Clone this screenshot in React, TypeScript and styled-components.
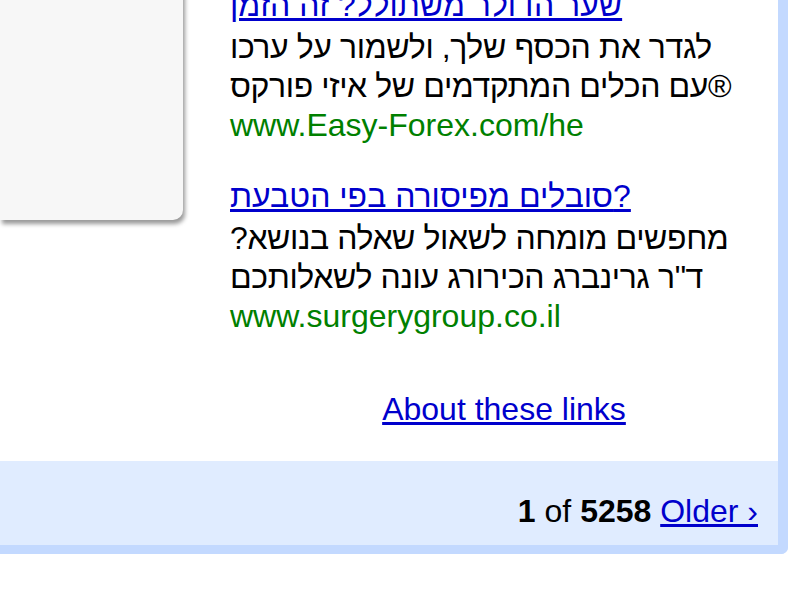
import styled, { createGlobalStyle } from "styled-components";

const GlobalStyle = createGlobalStyle`
  html, body {
    margin: 0;
    padding: 0;
    background: #ffffff;
    overflow: hidden;
  }
  body {
    font-family: "Liberation Sans", Arial, "DejaVu Sans", sans-serif;
    font-size: 32px;
    color: #000000;
  }
`;

type Ad = {
  title: string;
  lines: string[];
  url: string;
};

const ads: Ad[] = [
  {
    title: "שער הדולר משתולל? זה הזמן",
    lines: ["לגדר את הכסף שלך, ולשמור על ערכו", "עם הכלים המתקדמים של איזי פורקס®"],
    url: "www.Easy-Forex.com/he",
  },
  {
    title: "סובלים מפיסורה בפי הטבעת?",
    lines: ["?מחפשים מומחה לשאול שאלה בנושא", "ד\"ר גרינברג הכירורג עונה לשאלותכם"],
    url: "www.surgerygroup.co.il",
  },
];

const Frame = styled.div`
  width: 778px;
  border-right: 10px solid #c3d9ff;
  border-bottom: 9px solid #c3d9ff;
  border-bottom-right-radius: 7px;
  overflow: hidden;
`;

const Content = styled.div`
  display: grid;
  grid-template-columns: 183px 1fr;
  column-gap: 47px;
  align-items: start;
  margin-top: -14px;
  height: 475px;
  background: #ffffff;
`;

const SideCard = styled.div`
  height: 234px;
  background: #f7f7f7;
  border-bottom-right-radius: 10px;
  box-shadow: 2px 4px 4px rgba(0, 0, 0, 0.4);
`;

const AdColumn = styled.div`
  display: flex;
  flex-direction: column;
`;

const AdList = styled.div`
  display: flex;
  flex-direction: column;
  gap: 32px;
`;

const AdItem = styled.div`
  display: flex;
  flex-direction: column;
  direction: ltr;
  text-align: left;
  line-height: 39px;
`;

const AdTitle = styled.a`
  align-self: flex-start;
  margin-bottom: 3px;
  color: #0000cc;
  text-decoration: underline;
  cursor: pointer;
`;

const AdLine = styled.div`
  white-space: nowrap;
  letter-spacing: -0.4px;
`;

const AdUrl = styled.div`
  color: #008000;
`;

const AboutRow = styled.div`
  margin-top: 54px;
  text-align: center;
  line-height: 39px;
`;

const Link = styled.a`
  color: #0000cc;
  text-decoration: underline;
  cursor: pointer;
`;

const Footer = styled.div`
  height: 84px;
  box-sizing: border-box;
  padding: 31px 20px 0 0;
  background: #e0ecff;
  text-align: right;
  line-height: 39px;
  white-space: nowrap;
`;

const Strong = styled.b`
  font-weight: bold;
`;

export default function App() {
  return (
    <>
      <GlobalStyle />
      <Frame>
        <Content>
          <SideCard />
          <AdColumn>
            <AdList>
              {ads.map((ad) => (
                <AdItem key={ad.url}>
                  <AdTitle>{ad.title}</AdTitle>
                  {ad.lines.map((line) => (
                    <AdLine key={line}>{line}</AdLine>
                  ))}
                  <AdUrl>{ad.url}</AdUrl>
                </AdItem>
              ))}
            </AdList>
            <AboutRow>
              <Link>About these links</Link>
            </AboutRow>
          </AdColumn>
        </Content>
        <Footer>
          <Strong>1</Strong> of <Strong>5258</Strong> <Link>Older ›</Link>
        </Footer>
      </Frame>
    </>
  );
}
